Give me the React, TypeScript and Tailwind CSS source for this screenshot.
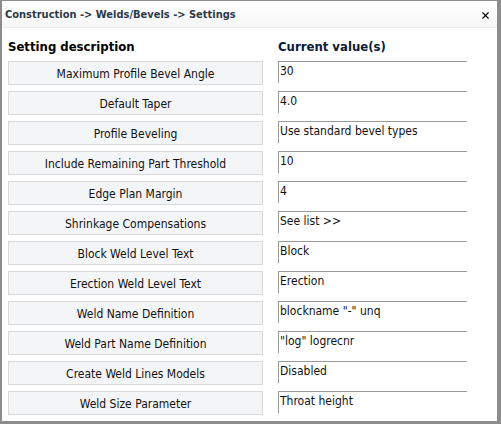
import { X } from "lucide-react";

const settings = [
    { label: "Maximum Profile Bevel Angle", value: "30" },
    { label: "Default Taper", value: "4.0" },
    { label: "Profile Beveling", value: "Use standard bevel types" },
    { label: "Include Remaining Part Threshold", value: "10" },
    { label: "Edge Plan Margin", value: "4" },
    { label: "Shrinkage Compensations", value: "See list >>" },
    { label: "Block Weld Level Text", value: "Block" },
    { label: "Erection Weld Level Text", value: "Erection" },
    { label: "Weld Name Definition", value: 'blockname "-" unq' },
    { label: "Weld Part Name Definition", value: '"log" logrecnr' },
    { label: "Create Weld Lines Models", value: "Disabled" },
    { label: "Weld Size Parameter", value: "Throat height" },
];

export default function App() {
    return (
        <div
            className="w-[501px] h-[424px] bg-[#8c8c8c] pl-[2px] pt-px pr-[4px] pb-[3px]"
            style={{ fontFamily: "'DejaVu Sans Condensed', 'DejaVu Sans', sans-serif" }}
        >
            <div className="h-full bg-white flex flex-col">
                {/* Title bar */}
                <div className="h-[27px] shrink-0 flex items-center justify-between pl-[3px] pr-[6px] pt-[3px] bg-gradient-to-b from-white to-[#f7f7f7] border-b border-[#ececec]">
                    <span className="text-[11px] font-bold text-[#2b3a4a]">
                        Construction -&gt; Welds/Bevels -&gt; Settings
                    </span>
                    <X className="h-[11px] w-[11px] text-black" strokeWidth={2.5} />
                </div>

                {/* Column headers */}
                <div className="flex pl-[6px] pt-[9px] h-[33px] shrink-0">
                    <div className="w-[270px] text-[13px] font-bold text-black">Setting description</div>
                    <div className="text-[13px] font-bold text-[#0a1a3a]">Current value(s)</div>
                </div>

                {/* Rows */}
                <div className="flex flex-col gap-[6px] pl-[6px]">
                    {settings.map(({ label, value }) => (
                        <div key={label} className="flex h-[24px]">
                            <button className="w-[255px] h-[24px] bg-[#f4f5f7] border border-[#d9d9d9] text-[12px] text-[#111] leading-none pt-px">
                                {label}
                            </button>
                            <div className="ml-[15px] w-[189px] h-[22px] border-t border-l border-[#9a9a9a] pl-[1px] pt-[2px] text-[12px] text-[#111] leading-[14px]">
                                {value}
                            </div>
                        </div>
                    ))}
                </div>
            </div>
        </div>
    );
}
